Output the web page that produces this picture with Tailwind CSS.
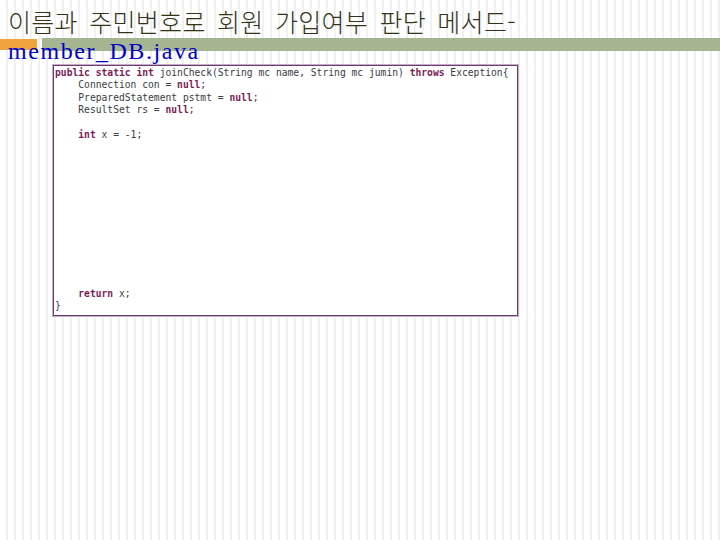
<!DOCTYPE html>
<html lang="ko">
<head>
  <meta charset="UTF-8" />
  <title>member_DB.java</title>
  <script src="https://cdn.jsdelivr.net/npm/@tailwindcss/browser@4"></script>
</head>
<body class="w-[720px] h-[540px] overflow-hidden bg-white">
  <div class="relative w-[720px] h-[540px] bg-[repeating-linear-gradient(90deg,#ffffff_0px,#ffffff_6px,#f1f1f1_6px,#f1f1f1_8px)]">
    <!-- accent bars behind the title -->
    <div class="absolute left-0 top-[39px] w-[37px] h-[11px] bg-[#f0a33c]"></div>
    <div class="absolute left-[42px] top-[38px] right-0 h-[13px] bg-[#a5b592]"></div>

    <header class="relative pl-[8px] pt-[3px]">
      <h1 class="text-[25px] leading-[36px] text-[#33331a] whitespace-nowrap tracking-[0.3px] [word-spacing:4px] font-['Noto_Sans_CJK_KR',sans-serif] font-light">이름과 주민번호로 회원 가입여부 판단 메서드-</h1>
      <p class="text-[24px] leading-[24px] mb-[2px] text-[#0000c8] whitespace-nowrap tracking-[1.55px] font-['Liberation_Serif',serif]">member_DB.java</p>
    </header>

    <div class="relative ml-[53px] w-[465px] h-[251px] border border-[#6e3a72] ring-1 ring-[#c3aec6] bg-white pt-[1px] pl-[1px]">
      <pre class="font-['DejaVu_Sans_Mono',monospace] text-[9.66px] leading-[12.45px] text-[#3c3c42]"><b class="text-[#7a1f55]">public static int</b> joinCheck(String mc name, String mc jumin) <b class="text-[#7a1f55]">throws</b> Exception{
    Connection con = <b class="text-[#7a1f55]">null</b>;
    PreparedStatement pstmt = <b class="text-[#7a1f55]">null</b>;
    ResultSet rs = <b class="text-[#7a1f55]">null</b>;

    <b class="text-[#7a1f55]">int</b> x = -1;</pre>
      <pre class="mt-[146px] font-['DejaVu_Sans_Mono',monospace] text-[9.66px] leading-[12.45px] text-[#3c3c42]">    <b class="text-[#7a1f55]">return</b> x;
}</pre>
    </div>
  </div>
</body>
</html>
